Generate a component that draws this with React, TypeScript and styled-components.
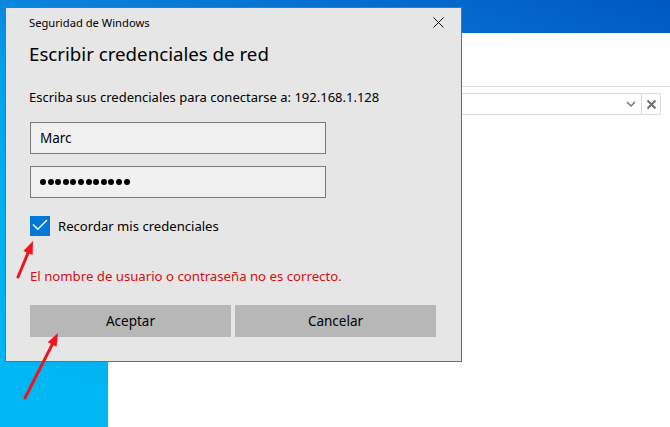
import React from "react";
import styled, { createGlobalStyle } from "styled-components";

const Global = createGlobalStyle`
  html, body { margin: 0; padding: 0; }
  body { font-family: "Noto Sans", "Open Sans", sans-serif; }
  * { box-sizing: border-box; }
`;

const Desktop = styled.div`
  position: relative;
  width: 670px;
  height: 427px;
  overflow: hidden;
  background: linear-gradient(
    200deg,
    #0058c2 0%,
    #0a84de 36%,
    #03a0ea 46%,
    #00b2f1 70%,
    #00b8f4 100%
  );
`;

/* Explorer-like window sitting behind the credentials dialog */
const BackWindow = styled.div`
  position: absolute;
  left: 108px;
  top: 33px;
  right: 0;
  bottom: 0;
  background: #ffffff;
  display: flex;
  flex-direction: column;
  padding-top: 53px;
`;

const Divider = styled.div`
  height: 1px;
  background: #dcdcdc;
`;

const ComboRow = styled.div`
  display: flex;
  margin: 6px 9px 0 20px;
  height: 22px;
  border: 1px solid #d9d9d9;
`;

const ComboField = styled.div`
  flex: 1;
  display: flex;
  align-items: center;
  justify-content: flex-end;
  padding-right: 5px;
`;

const ComboClear = styled.div`
  width: 19px;
  border-left: 1px solid #d9d9d9;
  display: flex;
  align-items: center;
  justify-content: center;
`;

const Dialog = styled.div`
  position: absolute;
  left: 5px;
  top: 7px;
  width: 457px;
  height: 355px;
  background: #e6e6e6;
  border: 1px solid #1883d7;
  display: flex;
  flex-direction: column;
  padding: 0 24px 23px 24px;
  color: #000;
`;

const TitleBar = styled.div`
  height: 28px;
  display: flex;
  align-items: center;
  justify-content: space-between;
  margin-right: -7px;
`;

const TitleText = styled.span`
  font-size: 11.2px;
  margin-left: -1px;
  color: #000;
`;

const CloseButton = styled.div`
  width: 11px;
  height: 11px;
  display: flex;
`;

const Heading = styled.h1`
  margin: 4px 0 0 -1px;
  font-size: 18.7px;
  font-weight: 400;
  line-height: 28px;
`;

const Prompt = styled.p`
  margin: 19px 0 0 -1px;
  font-size: 13px;
  line-height: 20px;
`;

const Field = styled.div<{ $gap: number }>`
  margin-top: ${(p) => p.$gap}px;
  width: 296px;
  height: 32px;
  background: #f0f0f0;
  border: 1px solid #7a7a7a;
  display: flex;
  align-items: center;
  padding-left: 9px;
  font-size: 13.5px;
`;

const Dots = styled.div`
  display: flex;
  gap: 1.6px;
`;

const Dot = styled.span`
  width: 6px;
  height: 6px;
  border-radius: 50%;
  background: #000;
`;

const CheckRow = styled.label`
  margin-top: 18px;
  display: flex;
  align-items: center;
  gap: 8px;
  font-size: 13.1px;
  height: 20px;
`;

const CheckBox = styled.span`
  width: 20px;
  height: 20px;
  background: #0078d7;
  display: flex;
`;

const ErrorText = styled.p`
  margin: 30px 0 0 0;
  font-size: 13.2px;
  line-height: 20px;
  color: #d40f0f;
`;

const Buttons = styled.div`
  margin-top: 19px;
  display: flex;
  gap: 4px;
`;

const Button = styled.button`
  width: 201px;
  height: 32px;
  border: none;
  background: #b7b7b7;
  font-family: inherit;
  font-size: 13.5px;
  color: #000;
  padding: 0;
`;

const Annotations = styled.svg`
  position: absolute;
  left: 0;
  top: 0;
  pointer-events: none;
`;

function Arrow({ x1, y1, x2, y2 }: { x1: number; y1: number; x2: number; y2: number }) {
  const dx = x2 - x1;
  const dy = y2 - y1;
  const len = Math.hypot(dx, dy);
  const ux = dx / len;
  const uy = dy / len;
  const head = 13;
  const half = 5;
  const bx = x2 - ux * head;
  const by = y2 - uy * head;
  const px = -uy;
  const py = ux;
  const pts = `${x2},${y2} ${bx + px * half},${by + py * half} ${bx - px * half},${by - py * half}`;
  return (
    <g>
      <line x1={x1} y1={y1} x2={bx + ux * 2} y2={by + uy * 2} stroke="#f0141e" strokeWidth={3} strokeLinecap="round" />
      <polygon points={pts} fill="#f0141e" />
    </g>
  );
}

export default function App() {
  return (
    <>
      <Global />
      <Desktop>
        <BackWindow>
          <Divider />
          <ComboRow>
            <ComboField>
              <svg width="10" height="6" viewBox="0 0 10 6">
                <path d="M1 1 L5 5 L9 1" fill="none" stroke="#777" strokeWidth="1.5" />
              </svg>
            </ComboField>
            <ComboClear>
              <svg width="11" height="11" viewBox="0 0 11 11">
                <path d="M1.5 1.5 L9.5 9.5 M9.5 1.5 L1.5 9.5" stroke="#6e6e6e" strokeWidth="2" />
              </svg>
            </ComboClear>
          </ComboRow>
        </BackWindow>

        <Dialog>
          <TitleBar>
            <TitleText>Seguridad de Windows</TitleText>
            <CloseButton>
              <svg width="11" height="11" viewBox="0 0 11 11">
                <path d="M0.5 0.5 L10.5 10.5 M10.5 0.5 L0.5 10.5" stroke="#111" strokeWidth="1" />
              </svg>
            </CloseButton>
          </TitleBar>
          <Heading>Escribir credenciales de red</Heading>
          <Prompt>Escriba sus credenciales para conectarse a: 192.168.1.128</Prompt>
          <Field $gap={15}>Marc</Field>
          <Field $gap={12}>
            <Dots>
              {Array.from({ length: 12 }).map((_, i) => (
                <Dot key={i} />
              ))}
            </Dots>
          </Field>
          <CheckRow>
            <CheckBox>
              <svg width="20" height="20" viewBox="0 0 20 20">
                <path d="M3 8.5 L7.8 13.3 L17 4" fill="none" stroke="#fff" strokeWidth="1.4" />
              </svg>
            </CheckBox>
            Recordar mis credenciales
          </CheckRow>
          <ErrorText>El nombre de usuario o contraseña no es correcto.</ErrorText>
          <Buttons>
            <Button>Aceptar</Button>
            <Button>Cancelar</Button>
          </Buttons>
        </Dialog>

        <Annotations width="670" height="427" viewBox="0 0 670 427">
          <Arrow x1={18} y1={277} x2={33} y2={241} />
          <Arrow x1={25} y1={398} x2={58} y2={333} />
        </Annotations>
      </Desktop>
    </>
  );
}
